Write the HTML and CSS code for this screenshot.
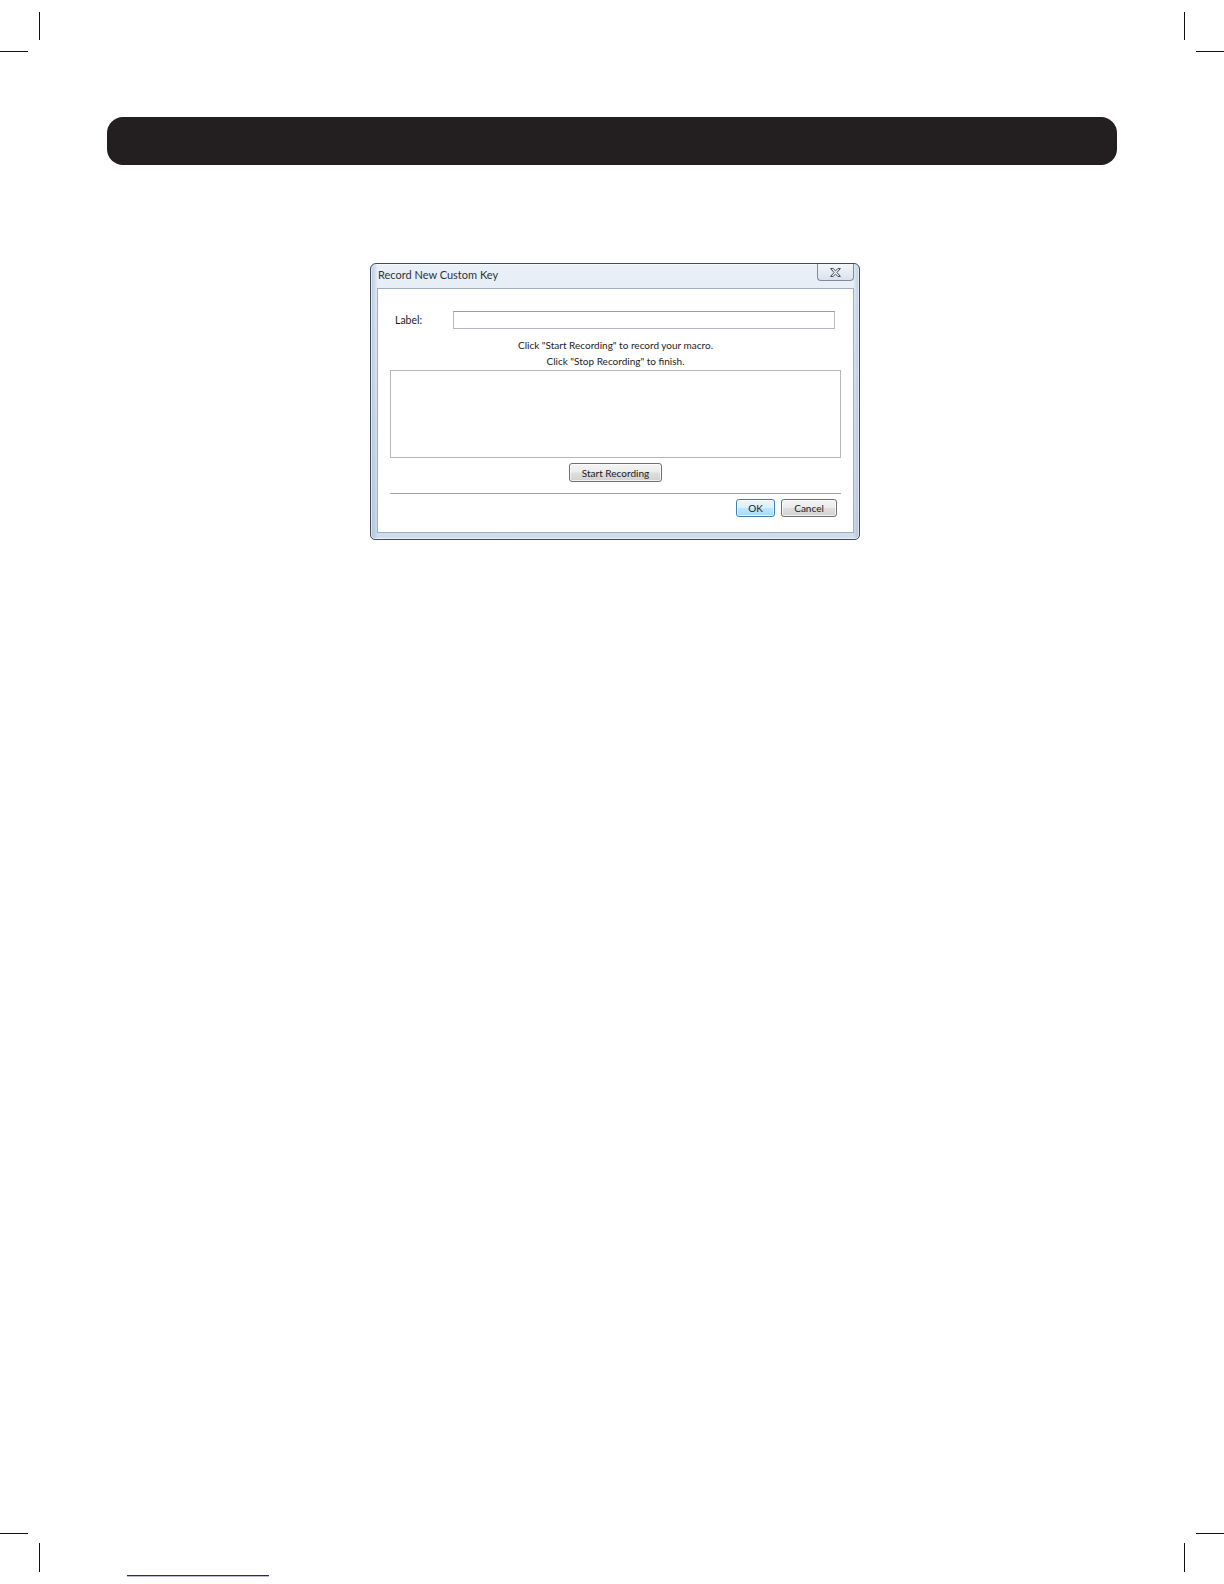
FILE: index.html
```html
<!DOCTYPE html>
<html lang="en">
<head>
<meta charset="utf-8">
<title>Record New Custom Key</title>
<link rel="stylesheet" href="styles.css">
</head>
<body>
<div class="page">
  <div class="marks-top">
    <div class="corner corner-left"><span class="vline"></span><span class="hline"></span></div>
    <div class="corner corner-right"><span class="vline"></span><span class="hline"></span></div>
  </div>

  <div class="banner"></div>

  <div class="window">
    <div class="titlebar">
      <span class="title">Record New Custom Key</span>
      <span class="close">
        <svg width="11" height="9" viewBox="0 0 11 9" aria-hidden="true">
          <polygon points="0.6,0.6 3.2,0.6 5.5,2.9 7.8,0.6 10.4,0.6 6.9,4.5 10.4,8.4 7.8,8.4 5.5,6.1 3.2,8.4 0.6,8.4 4.1,4.5" fill="#f4f6f9" stroke="#3f4650" stroke-width="1" stroke-linejoin="round"/>
        </svg>
      </span>
    </div>
    <div class="client">
      <div class="label-row">
        <span class="label">Label:</span>
        <span class="input"></span>
      </div>
      <div class="hint">
        <div>Click "Start Recording" to record your macro.</div>
        <div>Click "Stop Recording" to finish.</div>
      </div>
      <div class="record-box"></div>
      <div class="btn-row">
        <span class="btn btn-record">Start Recording</span>
      </div>
      <div class="sep"></div>
      <div class="footer">
        <span class="btn btn-ok">OK</span>
        <span class="btn btn-cancel">Cancel</span>
      </div>
    </div>
  </div>

  <div class="marks-bottom">
    <div class="corner corner-left"><span class="hline"></span><span class="vline"></span></div>
    <div class="link-line"></div>
    <div class="corner corner-right"><span class="hline"></span><span class="vline"></span></div>
  </div>
</div>
</body>
</html>
```

FILE: styles.css
```css
html, body {
  margin: 0;
  padding: 0;
  background: #ffffff;
}

.page {
  width: 1224px;
  height: 1584px;
  display: flex;
  flex-direction: column;
  font-family: "Lato", "Open Sans", sans-serif;
  color: #222222;
}

/* crop marks */
.marks-top {
  display: flex;
  justify-content: space-between;
  height: 52px;
}

.corner {
  width: 40px;
  display: flex;
  flex-direction: column;
}

.vline {
  display: block;
  width: 1px;
  background: #111111;
}

.hline {
  display: block;
  width: 28px;
  height: 1px;
  background: #111111;
}

.marks-top .vline {
  height: 28px;
  margin-top: 12px;
}

.marks-top .hline {
  margin-top: 11px;
}

.corner-left .vline {
  margin-left: 39px;
}

.corner-right .hline {
  margin-left: 12px;
}

.marks-bottom {
  margin-top: auto;
  height: 51px;
  display: grid;
  grid-template-columns: 40px 1fr 40px;
}

.marks-bottom .vline {
  height: 29px;
  margin-top: 9px;
}

.link-line {
  align-self: end;
  width: 142px;
  height: 1px;
  margin: 0 0 8px 87px;
  background: #26267c;
  box-shadow: 0 1px 0 rgba(60, 60, 150, 0.35);
}

/* black header bar */
.banner {
  margin: 65px 107px 0;
  height: 48px;
  border-radius: 16px;
  background: #231f20;
}

/* dialog window */
.window {
  box-sizing: border-box;
  width: 490px;
  height: 277px;
  margin: 98px 0 0 370px;
  border: 1px solid #434b57;
  border-radius: 6px 6px 5px 5px;
  padding: 0 5px 6px 6px;
  display: flex;
  flex-direction: column;
  background:
    linear-gradient(90deg, rgba(150, 176, 210, 0.6) 0, rgba(255, 255, 255, 0) 7px, rgba(255, 255, 255, 0) calc(100% - 6px), rgba(150, 176, 210, 0.6) 100%),
    linear-gradient(180deg, #e9f0f8 0%, #e0e9f4 40%, #d0ddec 100%);
  box-shadow: inset 0 0 0 1px rgba(255, 255, 255, 0.6);
}

.titlebar {
  height: 24px;
  display: flex;
  justify-content: space-between;
  align-items: flex-start;
}

.title {
  padding: 4px 0 0 1px;
  font-size: 11px;
  line-height: 13px;
  color: #2e3338;
}

.close {
  box-sizing: border-box;
  width: 37px;
  height: 17px;
  border: 1px solid #7f8b9c;
  border-top: none;
  border-radius: 0 0 4px 4px;
  background: linear-gradient(180deg, #f3f6fa 0%, #e6ecf4 55%, #d9e2ed 100%);
  display: flex;
  align-items: center;
  justify-content: center;
  padding-top: 1px;
}

.client {
  flex: 1;
  background: #ffffff;
  border: 1px solid #a0aec0;
  padding: 0 12px;
  display: flex;
  flex-direction: column;
  font-size: 10px;
}

.label-row {
  display: flex;
  align-items: center;
  margin-top: 22px;
  height: 18px;
}

.label {
  box-sizing: border-box;
  width: 63px;
  padding-left: 5px;
  font-size: 10.5px;
  color: #1c1c1c;
}

.input {
  box-sizing: border-box;
  width: 382px;
  height: 18px;
  border: 1px solid #b5b8bf;
  border-top-color: #9a9ea6;
  background: #ffffff;
}

.hint {
  margin-top: 8px;
  text-align: center;
  line-height: 16px;
  color: #222222;
}

.record-box {
  margin-top: 1px;
  height: 88px;
  box-sizing: border-box;
  border: 1px solid #b7b7b7;
  background: #ffffff;
}

.btn-row {
  margin-top: 5px;
  display: flex;
  justify-content: center;
}

.btn {
  box-sizing: border-box;
  display: flex;
  align-items: center;
  justify-content: center;
  border: 1px solid #707070;
  border-radius: 3px;
  color: #1a1a1a;
  background: linear-gradient(180deg, #f4f4f4 0%, #ececec 48%, #dedede 52%, #d2d2d2 100%);
  box-shadow: inset 0 0 0 1px rgba(255, 255, 255, 0.7);
}

.btn-record {
  width: 93px;
  height: 19px;
}

.sep {
  margin-top: 11px;
  height: 1px;
  background: #a3a3a3;
}

.footer {
  margin-top: 5px;
  display: flex;
  justify-content: flex-end;
  gap: 6px;
  padding-right: 4px;
}

.btn-ok {
  width: 39px;
  height: 18px;
  border-color: #3c7fb1;
  background: linear-gradient(180deg, #eaf6fd 0%, #d9f0fc 48%, #bee6fd 52%, #a7d9f5 100%);
}

.btn-cancel {
  width: 56px;
  height: 18px;
}
```
